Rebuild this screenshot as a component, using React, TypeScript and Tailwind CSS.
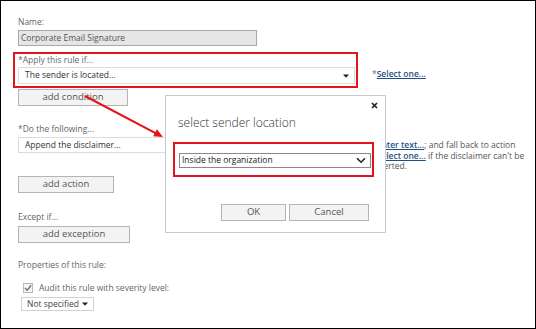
const Caret = () => (
  <svg width="6" height="4" viewBox="0 0 6 4" className="shrink-0">
    <path d="M0 0.5 H6 L3 3.8 Z" fill="#222" />
  </svg>
);

const Chevron = () => (
  <svg width="10" height="7" viewBox="0 0 10 7" className="shrink-0">
    <path d="M1 1.2 L5 5.2 L9 1.2" fill="none" stroke="#222" strokeWidth="1.6" />
  </svg>
);

const Button = ({ label, w }: { label: string; w: string }) => (
  <div
    className={`${w} h-[17px] flex items-center justify-center bg-[#f3f3f3] border border-[#b4b4b4] text-[9.5px] text-[#555]`}
  >
    {label}
  </div>
);

const Label = ({ children }: { children: React.ReactNode }) => (
  <div className="h-[12px] leading-[12px] text-[8.5px] text-[#666]">{children}</div>
);

const Link = ({ children }: { children: React.ReactNode }) => (
  <span className="text-[#1f4f82] font-semibold underline">{children}</span>
);

export default function App() {
  return (
    <div className="relative w-[536px] h-[329px] overflow-hidden bg-white border border-black font-['Open_Sans',sans-serif]">
      <div className="flex flex-col pl-[17px] pt-[15px]">
        <Label>Name:</Label>
        <div className="mt-[2px] w-[239px] h-[16px] flex items-center pl-[2px] bg-[#e6e6e6] border border-[#a8a8a8] text-[8.5px] text-[#555]">
          Corporate Email Signature
        </div>

        <div className="flex items-start mt-[6px] -ml-[5px]">
          <div className="w-[345px] h-[36px] border-2 border-[#e3131b] pl-[3px] pr-[1px]">
            <Label>*Apply this rule if...</Label>
            <div className="mt-[1px] h-[17px] flex items-center justify-between pl-[6px] pr-[5px] bg-white border border-[#dcdcdc] text-[8.5px] text-[#333]">
              The sender is located...
              <Caret />
            </div>
          </div>
          <div className="ml-[14px] mt-[16px] leading-[12px] text-[8.5px] text-[#666]">
            *<Link>Select one...</Link>
          </div>
        </div>

        <div className="mt-[1px]">
          <Button label="add condition" w="w-[110px]" />
        </div>

        <div className="mt-[17px]">
          <Label>*Do the following...</Label>
        </div>
        <div className="flex items-start mt-[2px] h-[17px]">
          <div className="w-[337px] h-[16px] flex items-center pl-[6px] bg-white border border-[#dcdcdc] text-[8.5px] text-[#333]">
            Append the disclaimer...
          </div>
          <div className="ml-[17px] mt-[3px] leading-[10.5px] text-[8.5px] text-[#555] whitespace-nowrap">
            <Link>*Enter text...</Link>; and fall back to action
            <br />
            <Link>*Select one...</Link> if the disclaimer can't be
            <br />
            inserted.
          </div>
        </div>

        <div className="mt-[22px]">
          <Button label="add action" w="w-[96px]" />
        </div>

        <div className="mt-[18px]">
          <Label>Except if...</Label>
        </div>
        <div className="mt-[3px]">
          <Button label="add exception" w="w-[112px]" />
        </div>

        <div className="mt-[16px]">
          <Label>Properties of this rule:</Label>
        </div>
        <div className="mt-[11px] h-[12px] flex items-center pl-[5px]">
          <svg width="10" height="10" viewBox="0 0 10 10" className="shrink-0">
            <rect x="0.5" y="0.5" width="9" height="9" fill="#f5f5f5" stroke="#b8b8b8" />
            <path d="M2 5 L4.2 7.3 L8.2 2.2" fill="none" stroke="#6f6f6f" strokeWidth="1.4" />
          </svg>
          <span className="ml-[6px] text-[8.5px] text-[#666]">Audit this rule with severity level:</span>
        </div>
        <div className="mt-[3px] ml-[3px] w-[73px] h-[14px] flex items-center justify-between pl-[5px] pr-[5px] bg-white border border-[#d2d2d2] text-[8.5px] text-[#444]">
          Not specified
          <Caret />
        </div>
      </div>

      <div className="absolute left-[164px] top-[94px] w-[221px] h-[138px] bg-white border border-[#c9c9c9] flex flex-col">
        <div className="flex justify-end pt-[6px] pr-[7px]">
          <svg width="7" height="7" viewBox="0 0 7 7">
            <path d="M1 1 L6 6 M6 1 L1 6" stroke="#222" strokeWidth="1.7" />
          </svg>
        </div>
        <div className="mt-[6px] pl-[12px] leading-[16px] text-[12px] font-light text-[#333]">
          select sender location
        </div>
        <div className="mt-[11px] ml-[7px] w-[201px] h-[35px] border-2 border-[#e3131b] pl-[4px] pr-[1px] pt-[9px]">
          <div className="h-[15px] flex items-center justify-between pl-[2px] pr-[4px] bg-white border border-[#8a8a8a] text-[8.5px] text-[#222]">
            Inside the organization
            <Chevron />
          </div>
        </div>
        <div className="mt-[27px] flex justify-end gap-[3px] pr-[16px]">
          <Button label="OK" w="w-[65px]" />
          <Button label="Cancel" w="w-[80px]" />
        </div>
      </div>

      <svg className="absolute left-0 top-0" width="534" height="327" viewBox="0 0 534 327">
        <line x1="84" y1="95" x2="155" y2="132.3" stroke="#e3131b" strokeWidth="2" />
        <polygon points="162,136 152.2,135.3 155.9,128.3" fill="#e3131b" />
      </svg>
    </div>
  );
}
